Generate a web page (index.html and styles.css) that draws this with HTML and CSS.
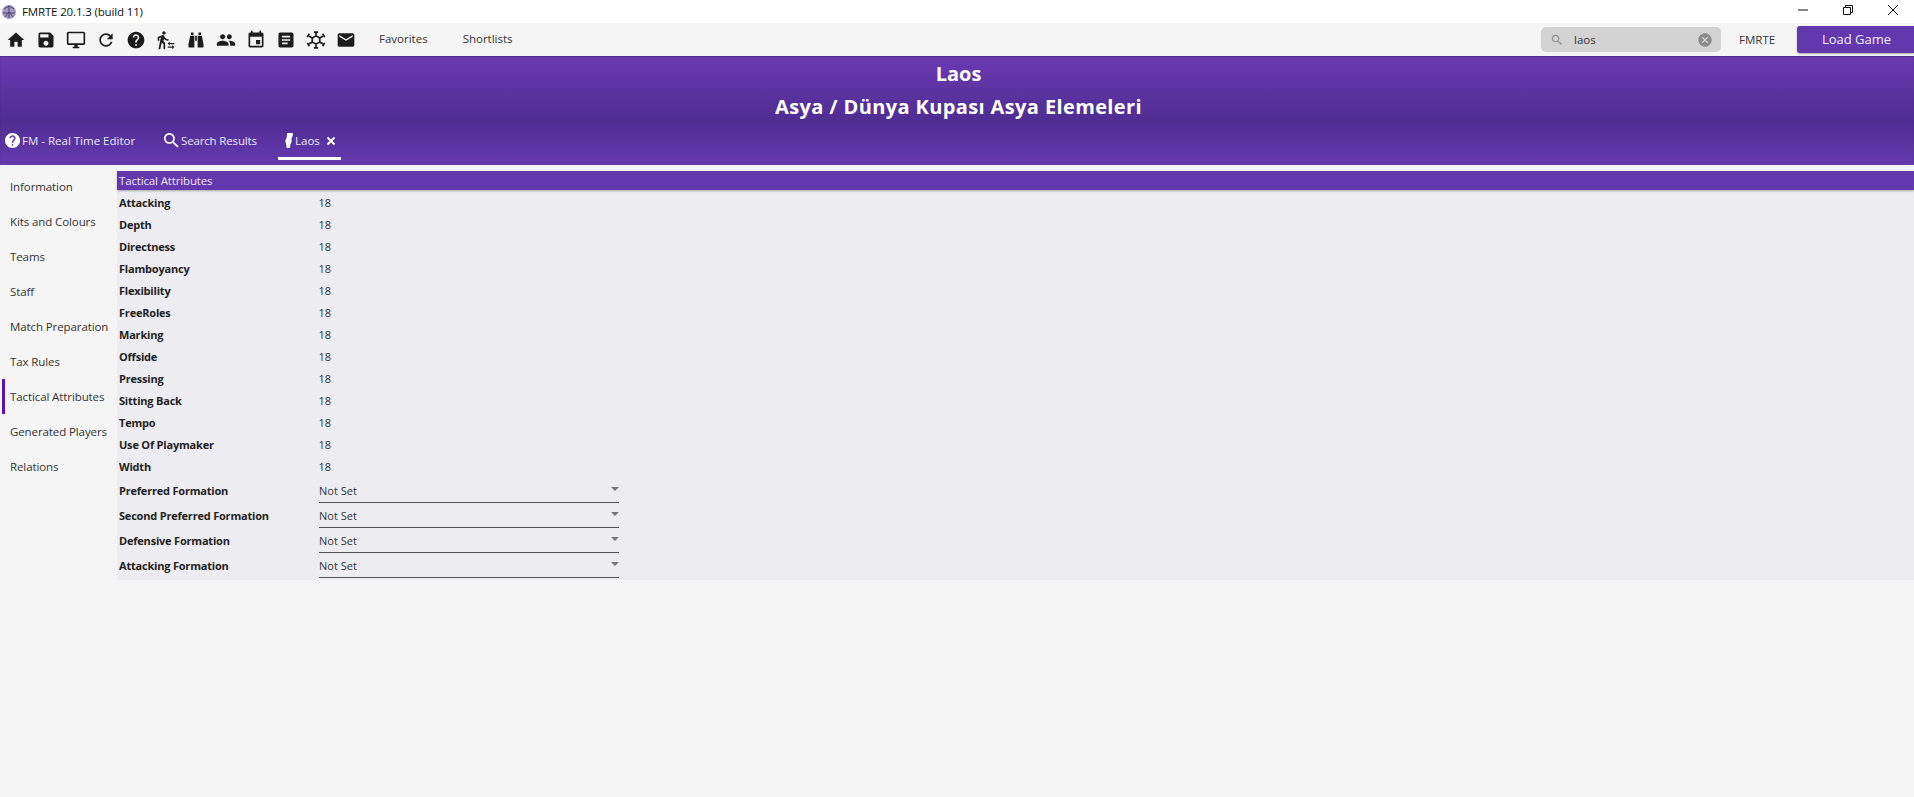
FILE: index.html
```html
<!DOCTYPE html>
<html lang="en">
<head>
<meta charset="utf-8">
<title>FMRTE 20.1.3 (build 11)</title>
<link rel="stylesheet" href="styles.css">
</head>
<body>
<div class="titlebar">
  <svg class="logo" viewBox="0 0 16 16"><circle cx="8" cy="8" r="7" fill="#a29ac0"/><path d="M3 5l5-3 5 3M2 9h12M4 13l4-5 4 5M8 2v12" stroke="#4d4778" stroke-width="1" fill="none"/></svg>
  <span class="apptitle">FMRTE 20.1.3 (build 11)</span>
  <div class="winctl">
    <svg class="winbtn" viewBox="0 0 12 12"><path d="M1 6h10" stroke="#111" stroke-width="1"/></svg>
    <svg class="winbtn" viewBox="0 0 12 12"><path d="M1.500 3.500h7v7h-7zM3.500 3.500v-2h7v7h-2" stroke="#111" stroke-width="1" fill="none"/></svg>
    <svg class="winbtn" viewBox="0 0 12 12"><path d="M1 1l10 10M11 1L1 11" stroke="#111" stroke-width="1" fill="none"/></svg>
  </div>
</div>

<div class="toolbar">
  <div class="tools">
    <svg class="tool" viewBox="0 0 24 24"><path d="M10 20v-6h4v6h5v-8h3L12 3 2 12h3v8z"/></svg>
    <svg class="tool" viewBox="0 0 24 24"><path d="M17 3H5c-1.110 0-2 .9-2 2v14c0 1.100.89 2 2 2h14c1.100 0 2-.9 2-2V7l-4-4zm-5 16c-1.660 0-3-1.340-3-3s1.340-3 3-3 3 1.340 3 3-1.340 3-3 3zm3-10H5V5h10v4z"/></svg>
    <svg class="tool" viewBox="0 0 24 24"><path d="M21 2H3c-1.100 0-2 .9-2 2v12c0 1.100.9 2 2 2h7v2H8v2h8v-2h-2v-2h7c1.100 0 2-.9 2-2V4c0-1.100-.9-2-2-2zm0 14H3V4h18v12z"/></svg>
    <svg class="tool" viewBox="0 0 24 24"><path d="M17.650 6.350C16.200 4.900 14.210 4 12 4c-4.420 0-7.990 3.580-7.990 8s3.570 8 7.990 8c3.730 0 6.840-2.550 7.730-6h-2.080c-.82 2.330-3.040 4-5.650 4-3.310 0-6-2.690-6-6s2.690-6 6-6c1.660 0 3.140.69 4.220 1.780L13 11h7V4l-2.350 2.350z"/></svg>
    <svg class="tool" viewBox="0 0 24 24"><path d="M12 2C6.480 2 2 6.480 2 12s4.480 10 10 10 10-4.480 10-10S17.520 2 12 2zm1 17h-2v-2h2v2zm2.070-7.750l-.9.92C13.450 12.900 13 13.500 13 15h-2v-.5c0-1.100.45-2.100 1.170-2.830l1.240-1.260c.37-.36.59-.86.59-1.410 0-1.100-.9-2-2-2s-2 .9-2 2H8c0-2.210 1.790-4 4-4s4 1.790 4 4c0 .88-.36 1.680-.93 2.250z"/></svg>
    <svg class="tool" viewBox="0 0 24 24"><path d="M16.490 15.500v-1.750L14 16.250l2.490 2.500V17H22v-1.500zm3.020 4.250H14v1.500h5.510V23L22 20.500 19.510 18zM9.500 5.500c1.100 0 2-.9 2-2s-.9-2-2-2-2 .9-2 2 .9 2 2 2zM5.750 8.900L3 23h2.100l1.750-8L9 17v6h2v-7.550L8.950 13.400l.6-3C10.850 12 12.800 13 15 13v-2c-1.850 0-3.450-1-4.350-2.450l-.95-1.600C9.350 6.350 8.700 6 8 6c-.25 0-.5.05-.75.15L2 8.300V13h2V9.650l1.750-.75"/></svg>
    <svg class="tool" viewBox="0 0 24 24"><path d="M6 3h3v3H6zM15 3h3v3h-3zM11 7h2v6h-2zM5 7h5v14H4a1 1 0 0 1-1-1v-3zM14 7h5l2 10v3a1 1 0 0 1-1 1h-6z"/></svg>
    <svg class="tool" viewBox="0 0 24 24"><path d="M16 11c1.660 0 2.990-1.340 2.990-3S17.660 5 16 5c-1.660 0-3 1.340-3 3s1.340 3 3 3zm-8 0c1.660 0 2.990-1.340 2.990-3S9.660 5 8 5C6.340 5 5 6.340 5 8s1.340 3 3 3zm0 2c-2.330 0-7 1.170-7 3.500V19h14v-2.500c0-2.330-4.670-3.500-7-3.500zm8 0c-.29 0-.62.02-.97.05 1.160.84 1.970 1.970 1.970 3.450V19h6v-2.500c0-2.330-4.670-3.500-7-3.500z"/></svg>
    <svg class="tool" viewBox="0 0 24 24"><path d="M17 12h-5v5h5v-5zM16 1v2H8V1H6v2H5c-1.110 0-1.990.9-1.990 2L3 19c0 1.100.89 2 2 2h14c1.100 0 2-.9 2-2V5c0-1.100-.9-2-2-2h-1V1h-2zm3 18H5V8h14v11z"/></svg>
    <svg class="tool" viewBox="0 0 24 24"><path d="M19 3H5c-1.100 0-2 .9-2 2v14c0 1.100.9 2 2 2h14c1.100 0 2-.9 2-2V5c0-1.100-.9-2-2-2zm-5 14H7v-2h7v2zm3-4H7v-2h10v2zm0-4H7V7h10v2z"/></svg>
    <svg class="tool tool-line" viewBox="0 0 24 24"><path d="M12 7l4.500 2.500v5L12 17l-4.500-2.500v-5zM12 1.500V7M12 17v5.500M9.500 2.500h5M9.500 21.500h5M16.500 9.500l5-3M7.500 14.500l-5 3M16.500 14.500l5 3M7.500 9.500l-5-3M20 4.500l2.500 4M1.500 15.500l2.500 4M22.500 15.500L20 19.500M4 4.500l-2.500 4"/></svg>
    <svg class="tool" viewBox="0 0 24 24"><path d="M20 4H4c-1.100 0-1.990.9-1.990 2L2 18c0 1.100.9 2 2 2h16c1.100 0 2-.9 2-2V6c0-1.100-.9-2-2-2zm0 4l-8 5-8-5V6l8 5 8-5v2z"/></svg>
  </div>
  <nav class="menus">
    <span>Favorites</span>
    <span>Shortlists</span>
  </nav>
  <div class="tb-right">
    <div class="search">
      <svg class="search-ico" viewBox="0 0 24 24"><path d="M15.500 14h-.79l-.28-.27C15.410 12.590 16 11.110 16 9.500 16 5.910 13.090 3 9.500 3S3 5.910 3 9.500 5.910 16 9.500 16c1.610 0 3.090-.59 4.230-1.570l.27.28v.79l5 4.990L20.490 19l-4.990-5zm-6 0C7.010 14 5 11.990 5 9.500S7.010 5 9.500 5 14 7.010 14 9.500 11.990 14 9.500 14z"/></svg>
      <span class="search-text">laos</span>
      <svg class="search-clear" viewBox="0 0 24 24"><path d="M12 2C6.470 2 2 6.470 2 12s4.470 10 10 10 10-4.470 10-10S17.530 2 12 2zm5 13.590L15.590 17 12 13.410 8.410 17 7 15.590 10.590 12 7 8.410 8.410 7 12 10.590 15.590 7 17 8.410 13.410 12 17 15.590z"/></svg>
    </div>
    <span class="user">FMRTE</span>
    <button class="load">Load Game</button>
  </div>
</div>

<header class="banner">
  <h1 class="b-title">Laos</h1>
  <h2 class="b-sub">Asya / Dünya Kupası Asya Elemeleri</h2>
  <div class="tabs">
    <div class="tab tab-home">
      <svg class="tab-ico" viewBox="2 2 20 20"><path d="M12 2C6.480 2 2 6.480 2 12s4.480 10 10 10 10-4.480 10-10S17.520 2 12 2zm1 17h-2v-2h2v2zm2.070-7.750l-.9.92C13.450 12.900 13 13.500 13 15h-2v-.5c0-1.100.45-2.100 1.170-2.830l1.240-1.260c.37-.36.59-.86.59-1.410 0-1.100-.9-2-2-2s-2 .9-2 2H8c0-2.210 1.790-4 4-4s4 1.790 4 4c0 .88-.36 1.680-.93 2.250z"/></svg>
      <span>FM - Real Time Editor</span>
    </div>
    <div class="tab tab-search">
      <svg class="tab-ico" viewBox="3 3 18 18"><path d="M15.500 14h-.79l-.28-.27C15.410 12.590 16 11.110 16 9.500 16 5.910 13.090 3 9.500 3S3 5.910 3 9.500 5.910 16 9.500 16c1.610 0 3.090-.59 4.230-1.570l.27.28v.79l5 4.990L20.490 19l-4.990-5zm-6 0C7.010 14 5 11.990 5 9.500S7.010 5 9.500 5 14 7.010 14 9.500 11.990 14 9.500 14z"/></svg>
      <span>Search Results</span>
    </div>
    <div class="tab tab-active">
      <svg class="tab-map" viewBox="0 0 8 16"><path d="M2 0h6v3L6.500 6 7 9l-1.500 3L5 16H1.500L1 12 0 8l1.500-3z"/></svg>
      <span>Laos</span>
      <svg class="tab-close" viewBox="0 0 10 10"><path d="M1.500 1.500l7 7M8.500 1.500l-7 7"/></svg>
    </div>
  </div>
</header>

<main class="body">
  <aside class="side">
    <div class="side-item">Information</div>
    <div class="side-item">Kits and Colours</div>
    <div class="side-item">Teams</div>
    <div class="side-item">Staff</div>
    <div class="side-item">Match Preparation</div>
    <div class="side-item">Tax Rules</div>
    <div class="side-item side-active">Tactical Attributes</div>
    <div class="side-item">Generated Players</div>
    <div class="side-item">Relations</div>
  </aside>
  <section class="panel">
    <div class="panel-head">Tactical Attributes</div>
    <div class="rows">
      <div class="row"><b>Attacking</b><span>18</span></div>
      <div class="row"><b>Depth</b><span>18</span></div>
      <div class="row"><b>Directness</b><span>18</span></div>
      <div class="row"><b>Flamboyancy</b><span>18</span></div>
      <div class="row"><b>Flexibility</b><span>18</span></div>
      <div class="row"><b>FreeRoles</b><span>18</span></div>
      <div class="row"><b>Marking</b><span>18</span></div>
      <div class="row"><b>Offside</b><span>18</span></div>
      <div class="row"><b>Pressing</b><span>18</span></div>
      <div class="row"><b>Sitting Back</b><span>18</span></div>
      <div class="row"><b>Tempo</b><span>18</span></div>
      <div class="row"><b>Use Of Playmaker</b><span>18</span></div>
      <div class="row"><b>Width</b><span>18</span></div>
    </div>
    <div class="selects">
      <div class="srow"><b>Preferred Formation</b><div class="select"><span>Not Set</span><i class="caret"></i></div></div>
      <div class="srow"><b>Second Preferred Formation</b><div class="select"><span>Not Set</span><i class="caret"></i></div></div>
      <div class="srow"><b>Defensive Formation</b><div class="select"><span>Not Set</span><i class="caret"></i></div></div>
      <div class="srow"><b>Attacking Formation</b><div class="select"><span>Not Set</span><i class="caret"></i></div></div>
    </div>
  </section>
</main>
</body>
</html>
```
FILE: styles.css
```css
* { box-sizing: border-box; }
html, body { margin: 0; height: 100%; }
body {
  background: #f5f5f5;
  font-family: "Open Sans", "Noto Sans", sans-serif;
  font-size: 12px;
  color: #222;
  overflow: hidden;
}
.titlebar {
  height: 23px;
  background: #fff;
  display: flex;
  align-items: center;
  padding-left: 1px;
}
.logo { width: 16px; height: 16px; }
.apptitle { margin-left: 5px; font-size: 11.5px; letter-spacing: -.15px; color: #111; }
.winctl { margin-left: auto; display: flex; gap: 33px; padding-right: 15px; margin-top: -4px; }
.winbtn { width: 12px; height: 12px; }
.toolbar {
  height: 33px;
  display: flex;
  align-items: center;
  background: #f5f5f5;
}
.tools { display: flex; gap: 10px; padding-left: 6px; }
.tool { width: 20px; height: 20px; fill: #1c1c1c; }
.tool-line { fill: none; stroke: #1c1c1c; stroke-width: 2; }
.menus { display: flex; gap: 35px; margin-left: 23px; color: #333; font-size: 11.5px; margin-top: -3px; }
.tb-right { margin-left: auto; display: flex; align-items: center; height: 100%; }
.search {
  width: 180px;
  height: 25px;
  background: #d3d3d3;
  border-radius: 5px;
  display: flex;
  align-items: center;
  padding: 0 8px 0 9px;
}
.search-ico { width: 14px; height: 14px; fill: #8f8f8f; }
.search-text { margin-left: 10px; color: #333; font-size: 11.5px; }
.search-clear { margin-left: auto; width: 16px; height: 16px; fill: #8a8a8a; }
.user { margin-left: 18px; width: 58px; color: #333; font-size: 11.5px; margin-top: -1px; }
.load {
  width: 117px;
  height: 27px;
  border: 0;
  padding: 0 0 2px 2px;
  border-radius: 3px 0 0 3px;
  background: #6337ae;
  color: #f2eefa;
  font: 13px "Open Sans", "Noto Sans", sans-serif;
  box-shadow: 0 1px 2px rgba(0,0,0,.3);
}
.banner {
  height: 109px;
  background: linear-gradient(#6a3ab2 0%, #4f2d91 60%, #663ab0 100%);
  color: #fff;
  text-align: center;
  box-shadow: inset 0 1px 1px rgba(40,20,80,.35);
  padding-left: 3px;
}
.b-title, .b-sub { margin: 0; font-weight: 700; font-size: 20px; line-height: 33px; }
.b-title { padding-top: 1px; }
.b-sub { letter-spacing: .38px; }
.tabs { display: flex; height: 33px; margin: 4px 0 0 -3px; text-align: left; font-size: 11.5px; color: #ece6f6; }
.tab { display: flex; align-items: center; height: 100%; gap: 2px; padding-bottom: 6px; }
.tab-home { margin-left: 5px; width: 159px; }
.tab-search { width: 114px; letter-spacing: -.15px; }
.tab-ico { width: 15px; height: 15px; fill: #fff; }
.tab-active {
  width: 63px;
  padding-left: 7px;
  border-bottom: 3px solid #fff;
  padding-bottom: 3px;
}
.tab-map { width: 8px; height: 15px; fill: #fff; }
.tab-close { width: 10px; height: 10px; margin-left: 4px; stroke: #fff; stroke-width: 2; fill: none; }
.body { display: flex; align-items: flex-start; }
.side { width: 117px; flex: none; padding: 4px 0 0 2px; }
.side-item {
  height: 35px;
  display: flex;
  align-items: center;
  padding-left: 8px;
  white-space: nowrap;
  color: #333;
  font-size: 11.5px;
  letter-spacing: -.1px;
}
.side-active { border-left: 3px solid #5a14b4; padding-left: 5px; }
.panel {
  flex: 1;
  margin-top: 6px;
  height: 409px;
  background: #edecf1;
}
.panel-head {
  height: 19px;
  line-height: 19px;
  background: #6337ae;
  color: #ece6f6;
  padding-left: 2px;
  font-size: 11.5px;
  letter-spacing: -.15px;
  box-shadow: 0 1px 2px rgba(0,0,0,.3);
}
.rows { padding-top: 1px; }
.row, .srow { display: flex; align-items: center; padding-left: 2px; font-size: 11px; color: #333; }
.row { height: 22px; }
.row b, .srow b { width: 200px; flex: none; font-weight: 700; font-size: 11px; letter-spacing: -.2px; color: #222; white-space: nowrap; }
.row b { width: 199.500px; }
.selects { padding-top: 1px; }
.srow { height: 25px; }
.select {
  width: 300px;
  height: 25px;
  display: flex;
  align-items: center;
  padding-left: 0;
  border-bottom: 1px solid #555;
}
.caret {
  margin-left: auto;
  margin-bottom: 2px;
  width: 0;
  height: 0;
  border-left: 4px solid transparent;
  border-right: 4px solid transparent;
  border-top: 4px solid #777;
}
```
